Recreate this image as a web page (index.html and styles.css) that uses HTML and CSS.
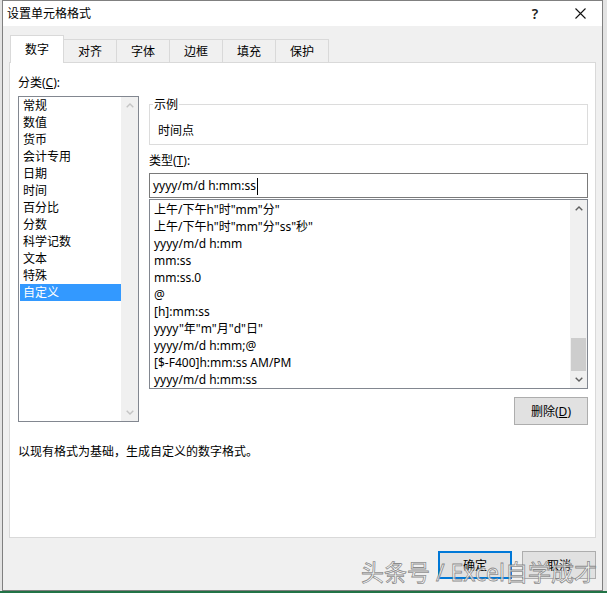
FILE: index.html
```html
<!DOCTYPE html>
<html lang="zh-CN">
<head>
  <meta charset="UTF-8" />
  <title>设置单元格格式</title>
  <link rel="stylesheet" href="styles.css">
</head>
<body>

  <div class="dialog">
    <!-- 标题栏 -->
    <div class="titlebar">
      <span class="title">设置单元格格式</span>
      <span class="help">?</span>
      <span class="close">
        <svg width="11" height="11" viewBox="0 0 11 11"><path d="M0.5 0.5 L10.5 10.5 M10.5 0.5 L0.5 10.5" stroke="#111" stroke-width="1.1" fill="none"/></svg>
      </span>
    </div>

    <div class="body">
      <!-- 选项卡 -->
      <div class="tabs">
        <div class="tab active">数字</div>
        <div class="tab">对齐</div>
        <div class="tab">字体</div>
        <div class="tab">边框</div>
        <div class="tab">填充</div>
        <div class="tab">保护</div>
      </div>

      <div class="panel">
        <div class="label">分类(<u>C</u>):</div>
        <div class="cols">
          <div class="listbox category">
            <ul class="items">
              <li>常规</li>
              <li>数值</li>
              <li>货币</li>
              <li>会计专用</li>
              <li>日期</li>
              <li>时间</li>
              <li>百分比</li>
              <li>分数</li>
              <li>科学记数</li>
              <li>文本</li>
              <li>特殊</li>
              <li class="selected">自定义</li>
            </ul>
            <div class="scrollbar disabled">
              <div class="sb-btn"><svg width="8" height="5" viewBox="0 0 8 5"><polyline points="0.7,4.3 4,1 7.3,4.3" /></svg></div>
              <div class="sb-track"></div>
              <div class="sb-btn"><svg width="8" height="5" viewBox="0 0 8 5"><polyline points="0.7,0.7 4,4 7.3,0.7" /></svg></div>
            </div>
          </div>

          <div class="right">
            <fieldset class="sample">
              <legend>示例</legend>
              <div class="sample-text">时间点</div>
            </fieldset>

            <div class="label type-label">类型(<u>T</u>):</div>
            <div class="input">yyyy/m/d h:mm:ss<span class="caret"></span></div>

            <div class="listbox formats">
              <ul class="items">
                <li>上午/下午h"时"mm"分"</li>
                <li>上午/下午h"时"mm"分"ss"秒"</li>
                <li>yyyy/m/d h:mm</li>
                <li>mm:ss</li>
                <li>mm:ss.0</li>
                <li>@</li>
                <li>[h]:mm:ss</li>
                <li>yyyy"年"m"月"d"日"</li>
                <li>yyyy/m/d h:mm;@</li>
                <li>[$-F400]h:mm:ss AM/PM</li>
                <li>yyyy/m/d h:mm:ss</li>
              </ul>
              <div class="scrollbar">
                <div class="sb-btn"><svg width="8" height="5" viewBox="0 0 8 5"><polyline points="0.7,4.3 4,1 7.3,4.3" /></svg></div>
                <div class="sb-track"><div class="sb-thumb"></div></div>
                <div class="sb-btn"><svg width="8" height="5" viewBox="0 0 8 5"><polyline points="0.7,0.7 4,4 7.3,0.7" /></svg></div>
              </div>
            </div>

            <div class="actions">
              <button class="btn">删除(<u>D</u>)</button>
            </div>
          </div>
        </div>

        <p class="desc">以现有格式为基础，生成自定义的数字格式。</p>
      </div>

      <!-- 底部按钮 -->
      <div class="footer">
        <button class="btn default">确定</button>
        <button class="btn">取消</button>
      </div>
    </div>
  </div>

  <div class="watermark">头条号 / Excel自学成才</div>

</body>
</html>
```

FILE: styles.css
```css
* {
  box-sizing: border-box;
}

html, body {
  margin: 0;
  padding: 0;
}

body {
  width: 607px;
  height: 593px;
  overflow: hidden;
  position: relative;
  background: linear-gradient(to top, #217346 2px, #e3e3e3 2px);
  font-family: "Noto Sans", "Noto Sans CJK SC", sans-serif;
  font-size: 12px;
  color: #000;
}

.dialog {
  margin-left: 2px;
  width: 601px;
  height: 591px;
  border: 1px solid #808080;
  background-color: #f0f0f0;
  display: flex;
  flex-direction: column;
}

.titlebar {
  height: 25px;
  background-color: #fff;
  display: flex;
  align-items: center;
}

.title {
  flex: 1;
  padding-left: 4px;
  line-height: 25px;
}

.help,
.close {
  height: 25px;
  display: flex;
  align-items: center;
  justify-content: center;
}

.help {
  width: 46px;
  font-size: 14px;
  font-weight: 600;
  color: #222;
}

.close {
  width: 44px;
}

.body {
  flex: 1;
  padding: 9px 6px 0 6px;
  display: flex;
  flex-direction: column;
}

.tabs {
  display: flex;
  align-items: flex-end;
  height: 28px;
  padding-left: 1px;
}

.tab {
  width: 54px;
  height: 24px;
  margin-left: -1px;
  border: 1px solid #d9d9d9;
  border-bottom: none;
  background-color: #f0f0f0;
  display: flex;
  align-items: center;
  justify-content: center;
  line-height: 17px;
}

.tab:first-child {
  margin-left: 0;
}

.tab.active {
  height: 28px;
  background-color: #fff;
  position: relative;
  z-index: 1;
}

.panel {
  margin-top: -1px;
  height: 476px;
  background-color: #fff;
  border: 1px solid #d9d9d9;
  padding: 11px 7px 0 8px;
}

.label {
  line-height: 17px;
  margin-bottom: 5px;
}

.cols {
  display: flex;
  align-items: flex-start;
  gap: 10px;
}

.listbox {
  display: flex;
  background-color: #fff;
  border: 1px solid #828790;
}

.listbox.category {
  width: 121px;
  height: 326px;
}

.items {
  flex: 1;
  list-style: none;
  margin: 0;
  padding: 0 0 0 1px;
  overflow: hidden;
}

.items li {
  line-height: 17px;
  padding-left: 3px;
  white-space: nowrap;
}

.items li.selected {
  background-color: #3399ff;
  color: #fff;
}

.scrollbar {
  width: 17px;
  background-color: #f0f0f0;
  display: flex;
  flex-direction: column;
}

.sb-btn {
  height: 17px;
  display: flex;
  align-items: center;
  justify-content: center;
}

.sb-btn polyline {
  fill: none;
  stroke: #606060;
  stroke-width: 1.4;
}

.scrollbar.disabled polyline {
  stroke: #c4c4c4;
}

.sb-track {
  flex: 1;
  display: flex;
  flex-direction: column;
  justify-content: flex-end;
  align-items: center;
}

.sb-thumb {
  width: 15px;
  height: 33px;
  background-color: #cdcdcd;
}

.right {
  width: 439px;
}

.sample {
  margin: 0;
  padding: 9px 8px 5px;
  border: 1px solid #dcdcdc;
  min-width: 0;
}

.sample legend {
  margin-left: -5px;
  padding: 0 1px;
  line-height: 17px;
}

.sample-text {
  line-height: 17px;
}

.type-label {
  margin: 7px 0 0;
}

.input {
  margin-top: 4px;
  height: 25px;
  border: 1px solid #7a7a7a;
  padding-left: 3px;
  line-height: 23px;
  white-space: nowrap;
}

.caret {
  display: inline-block;
  width: 1px;
  height: 17px;
  margin-left: 1px;
  background-color: #000;
  vertical-align: middle;
}

.listbox.formats {
  margin-top: 1px;
  height: 190px;
}

.listbox.formats .items {
  padding-top: 1px;
}

.actions {
  display: flex;
  justify-content: flex-end;
  margin-top: 8px;
}

.btn {
  width: 74px;
  height: 28px;
  padding: 0;
  border: 1px solid #adadad;
  background-color: #e1e1e1;
  font: inherit;
  color: #000;
}

.btn.default {
  border: 2px solid #0078d7;
}

.desc {
  margin: 18px 0 0;
  line-height: 17px;
}

.footer {
  display: flex;
  justify-content: flex-end;
  gap: 10px;
  margin-top: 13px;
}

.watermark {
  position: absolute;
  right: 10px;
  top: 557px;
  font-size: 23px;
  line-height: 30px;
  white-space: nowrap;
  color: rgba(255, 255, 255, 0.75);
  -webkit-text-stroke: 0.8px rgba(120, 120, 120, 0.85);
}
```
